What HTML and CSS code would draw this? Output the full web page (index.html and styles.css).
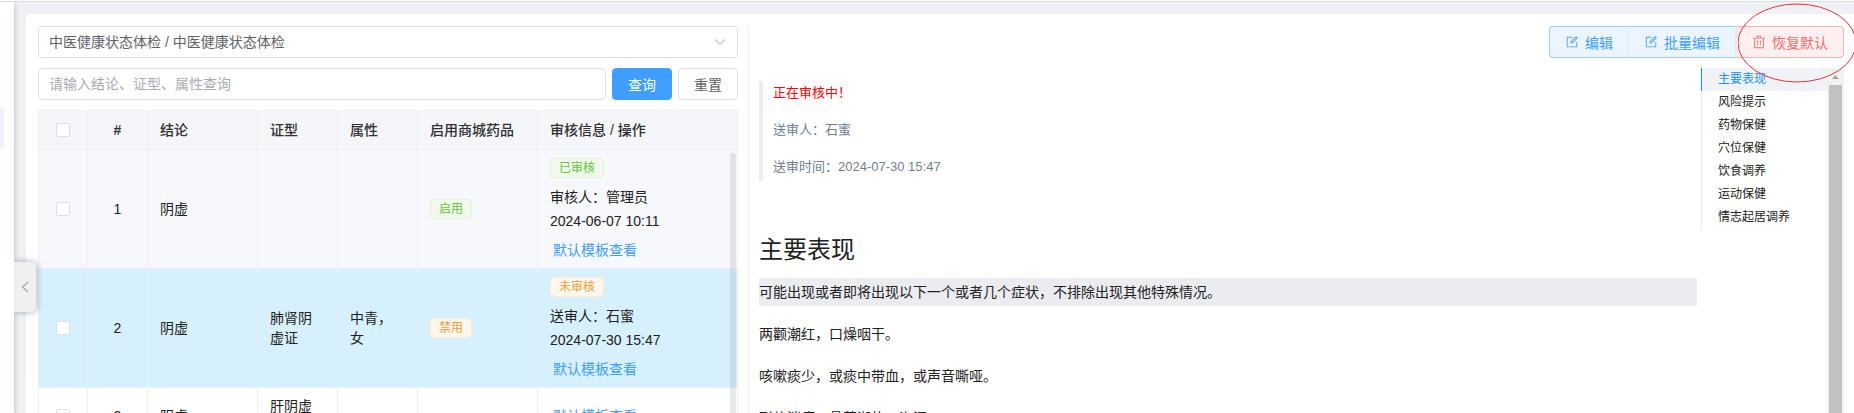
FILE: index.html
```html
<!DOCTYPE html>
<html lang="zh-CN">
  <head>
    <meta charset="UTF-8">
    <title>中医健康状态体检</title>
    <link rel="stylesheet" href="styles.css">
  </head>
  <body>
    <!-- Collapsed sidebar -->
    <aside class="sidebar">
      <div class="sidebar-item"></div>
      <button class="sidebar-toggle" type="button" aria-label="收起">
        <svg width="8" height="12" viewBox="0 0 8 12"><path d="M7 1L1.5 6L7 11" fill="none" stroke="#a8a8a8" stroke-width="1.3"/></svg>
      </button>
    </aside>

    <main class="card">
      <!-- Left: filter and list -->
      <section class="list">
        <div class="select-box">
          <select class="control" aria-label="体检类型">
            <option>中医健康状态体检 / 中医健康状态体检</option>
          </select>
          <svg class="chevron" width="12" height="8" viewBox="0 0 12 8"><path d="M1 1.5L6 6.5L11 1.5" fill="none" stroke="#c0c4cc" stroke-width="1.2"/></svg>
        </div>

        <form class="search">
          <input class="control" type="text" aria-label="查询" placeholder="请输入结论、证型、属性查询">
          <button class="btn btn-primary" type="button">查询</button>
          <button class="btn" type="button">重置</button>
        </form>

        <div class="table-box">
          <table>
            <colgroup>
              <col class="col-check">
              <col class="col-index">
              <col class="col-result">
              <col class="col-type">
              <col class="col-type">
              <col class="col-drug">
              <col>
            </colgroup>
            <thead>
              <tr>
                <th class="center"><input type="checkbox" aria-label="全选"></th>
                <th class="center">#</th>
                <th>结论</th>
                <th>证型</th>
                <th>属性</th>
                <th>启用商城药品</th>
                <th>审核信息 / 操作</th>
              </tr>
            </thead>
            <tbody>
              <tr class="striped">
                <td class="center"><input type="checkbox" aria-label="选择 1"></td>
                <td class="center">1</td>
                <td>阴虚</td>
                <td></td>
                <td></td>
                <td><span class="tag tag-success">启用</span></td>
                <td>
                  <span class="tag tag-success">已审核</span>
                  <div class="audit">审核人：管理员<br>2024-06-07 10:11</div>
                  <a class="link" href="#">默认模板查看</a>
                </td>
              </tr>
              <tr class="current">
                <td class="center"><input type="checkbox" aria-label="选择 2"></td>
                <td class="center">2</td>
                <td>阴虚</td>
                <td>肺肾阴虚证</td>
                <td>中青，女</td>
                <td><span class="tag tag-warning">禁用</span></td>
                <td>
                  <span class="tag tag-warning">未审核</span>
                  <div class="audit">送审人：石蜜<br>2024-07-30 15:47</div>
                  <a class="link" href="#">默认模板查看</a>
                </td>
              </tr>
              <tr>
                <td class="center"><input type="checkbox" aria-label="选择 3"></td>
                <td class="center">3</td>
                <td>阴虚</td>
                <td>肝阴虚证</td>
                <td></td>
                <td></td>
                <td><a class="link" href="#">默认模板查看</a></td>
              </tr>
            </tbody>
          </table>
          <div class="table-thumb"></div>
        </div>
      </section>

      <!-- Right: detail -->
      <section class="detail">
        <div class="btn-group">
          <button class="btn btn-edit" type="button">
            <svg class="icon" viewBox="0 0 1024 1024"><path fill="currentColor" d="M832 512a32 32 0 1 1 64 0v352a32 32 0 0 1-32 32H160a32 32 0 0 1-32-32V160a32 32 0 0 1 32-32h352a32 32 0 0 1 0 64H192v640h640V512z"/><path fill="currentColor" d="m469.952 554.24 52.8-7.552L847.104 222.4a32 32 0 1 0-45.248-45.248L477.44 501.44l-7.552 52.8zm422.4-422.4a96 96 0 0 1 0 135.808l-331.84 331.84a32 32 0 0 1-18.112 9.088L436.8 623.68a32 32 0 0 1-36.224-36.224l15.104-105.6a32 32 0 0 1 9.024-18.112l331.904-331.84a96 96 0 0 1 135.744 0z"/></svg>
            编辑
          </button>
          <button class="btn btn-edit" type="button">
            <svg class="icon" viewBox="0 0 1024 1024"><path fill="currentColor" d="M832 512a32 32 0 1 1 64 0v352a32 32 0 0 1-32 32H160a32 32 0 0 1-32-32V160a32 32 0 0 1 32-32h352a32 32 0 0 1 0 64H192v640h640V512z"/><path fill="currentColor" d="m469.952 554.24 52.8-7.552L847.104 222.4a32 32 0 1 0-45.248-45.248L477.44 501.44l-7.552 52.8zm422.4-422.4a96 96 0 0 1 0 135.808l-331.84 331.84a32 32 0 0 1-18.112 9.088L436.8 623.68a32 32 0 0 1-36.224-36.224l15.104-105.6a32 32 0 0 1 9.024-18.112l331.904-331.84a96 96 0 0 1 135.744 0z"/></svg>
            批量编辑
          </button>
          <button class="btn btn-danger" type="button">
            <svg class="icon" viewBox="0 0 1024 1024"><path fill="currentColor" d="M160 256H96a32 32 0 0 1 0-64h256V95.936a32 32 0 0 1 32-32h256a32 32 0 0 1 32 32V192h256a32 32 0 1 1 0 64h-64v672a32 32 0 0 1-32 32H192a32 32 0 0 1-32-32V256zm448-64v-64H416v64h192zM224 896h576V256H224v640zm192-128a32 32 0 0 1-32-32V416a32 32 0 0 1 64 0v320a32 32 0 0 1-32 32zm192 0a32 32 0 0 1-32-32V416a32 32 0 0 1 64 0v320a32 32 0 0 1-32 32z"/></svg>
            恢复默认
          </button>
        </div>

        <div class="detail-body">
          <article class="content">
            <blockquote>
              <p class="pending">正在审核中！</p>
              <p>送审人：石蜜</p>
              <p>送审时间：2024-07-30 15:47</p>
            </blockquote>
            <h2>主要表现</h2>
            <p class="lead">可能出现或者即将出现以下一个或者几个症状，不排除出现其他特殊情况。</p>
            <p>两颧潮红，口燥咽干。</p>
            <p>咳嗽痰少，或痰中带血，或声音嘶哑。</p>
            <p>形体消瘦，骨蒸潮热，盗汗。</p>
          </article>

          <nav class="anchor">
            <a class="active" href="#">主要表现</a>
            <a href="#">风险提示</a>
            <a href="#">药物保健</a>
            <a href="#">穴位保健</a>
            <a href="#">饮食调养</a>
            <a href="#">运动保健</a>
            <a href="#">情志起居调养</a>
          </nav>

          <div class="scrollbar">
            <svg width="17" height="17" viewBox="0 0 17 17"><path d="M5 11L8.5 7L12 11Z" fill="#a3a3a3"/></svg>
            <div class="scrollbar-thumb"></div>
          </div>
        </div>
      </section>
    </main>

    <!-- Red marker around the reset button -->
    <svg class="marker" width="116" height="86" viewBox="0 0 116 86"><ellipse cx="59" cy="43" rx="59" ry="39" fill="none" stroke="#e6323c"/></svg>
  </body>
</html>
```

FILE: styles.css
```css
* {
  box-sizing: border-box;
}

body {
  margin: 0;
  height: 100vh;
  display: flex;
  overflow: hidden;
  position: relative;
  padding-top: 1px;
  border-top: 1px solid #fff;
  box-shadow: inset 0 1px #dcdfe0; /* header bottom line */
  background: #eff1f5;
  color: #212121;
  font-family: "Liberation Sans", "Noto Sans CJK SC", sans-serif;
  font-size: 14px;
}

p, h2, blockquote {
  margin: 0;
}

a {
  text-decoration: none;
}

button, input, select {
  font: inherit;
}

/* Sidebar */
.sidebar {
  position: relative;
  flex: none;
  width: 14px;
  background: #fff;
  box-shadow: 1px 2px 5px rgba(0, 21, 41, 0.2);
}

.sidebar-item {
  width: 4px;
  height: 40px;
  margin-top: 106px;
  border-radius: 0 4px 4px 0;
  background: #ecf3fe;
}

.sidebar-toggle {
  position: absolute;
  top: 260px;
  left: 14px;
  z-index: 2;
  display: flex;
  align-items: center;
  justify-content: center;
  width: 22px;
  height: 50px;
  padding: 0;
  border: 0;
  border-radius: 0 5px 5px 0;
  background: #f0f0f0;
  box-shadow: 1px 0 6px rgba(0, 21, 41, 0.35);
  clip-path: inset(-8px -8px -8px 0);
}

/* Page card */
.card {
  flex: 1;
  min-width: 0;
  display: flex;
  margin: 12px 0 0 12px;
  padding: 12px 10px 0 12px;
  border-radius: 4px 0 0 0;
  background: #fff;
}

.list {
  flex: none;
  width: 700px;
  display: flex;
  flex-direction: column;
  gap: 10px;
}

.control {
  width: 100%;
  height: 32px;
  padding: 0 10px;
  border: 1px solid #dcdfe6;
  border-radius: 4px;
  background: #fff;
  color: #606266;
  appearance: none;
}

.control::placeholder {
  color: #a8abb2;
}

.select-box {
  position: relative;
  display: flex;
}

.chevron {
  position: absolute;
  top: 12px;
  right: 12px;
  pointer-events: none;
}

.search {
  display: flex;
  gap: 6px;
}

.search .control {
  flex: 1;
}

.btn {
  flex: none;
  height: 32px;
  padding: 0 15px;
  border: 1px solid #dcdfe6;
  border-radius: 4px;
  background: #fff;
  color: #606266;
}

.btn-primary {
  border-color: #409eff;
  background: #409eff;
  color: #fff;
}

/* Table */
.table-box {
  position: relative;
  flex: 1;
  min-height: 0;
  overflow: hidden;
  border: solid #ebeef5;
  border-width: 1px 0 0 1px;
}

table {
  width: 100%;
  table-layout: fixed;
  border-spacing: 0;
}

.col-check {
  width: 49px;
}

.col-index {
  width: 60px;
}

.col-result {
  width: 110px;
}

.col-type {
  width: 80px;
}

.col-drug {
  width: 120px;
}

th, td {
  padding: 8px 12px;
  border: solid #ebeef5;
  border-width: 0 1px 1px 0;
  text-align: left;
  line-height: 20px;
}

th {
  height: 39px;
  background: #f4f6fa;
  color: #303133;
  font-weight: 500;
  white-space: nowrap;
}

.center {
  text-align: center;
}

th.center {
  font-weight: 700;
}

.striped td {
  background: #f6f8fc;
}

.current td {
  background: #d7f0fe;
}

input[type="checkbox"] {
  display: block;
  width: 14px;
  height: 14px;
  margin: 0 auto;
  border: 1px solid #dcdfe6;
  border-radius: 2px;
  background: #fff;
  appearance: none;
}

.tag {
  display: block;
  width: max-content;
  height: 20px;
  padding: 0 8px;
  border: 1px solid;
  border-radius: 4px;
  font-size: 12px;
  line-height: 18px;
}

.tag-success {
  border-color: #e1f3d8;
  background: #f0f9eb;
  color: #67c23a;
}

.tag-warning {
  border-color: #faecd8;
  background: #fdf6ec;
  color: #e6a23c;
}

.audit {
  margin: 7px 0;
  line-height: 24px;
}

.link {
  display: block;
  padding: 0 3px;
  color: #409eff;
}

.table-thumb {
  position: absolute;
  top: 42px;
  right: 2px;
  width: 6px;
  height: 100%;
  border-radius: 4px;
  background: rgba(144, 147, 153, 0.2);
}

/* Detail */
.detail {
  flex: 1;
  min-width: 0;
  display: flex;
  flex-direction: column;
  gap: 10px;
  margin-left: 10px;
  padding-left: 10px;
  border-left: 1px solid #ebeef5;
}

.btn-group {
  display: flex;
  justify-content: flex-end;
}

.btn-group .btn {
  display: flex;
  align-items: center;
  gap: 6px;
  border-radius: 0;
}

.btn-group .btn:first-child {
  border-radius: 4px 0 0 4px;
}

.btn-group .btn:last-child {
  border-radius: 0 4px 4px 0;
}

.icon {
  width: 14px;
  height: 14px;
}

.btn-edit {
  border-color: #a0cfff;
  border-right-color: #d9ecff;
  background: #ecf5ff;
  color: #409eff;
}

.btn-edit + .btn-edit {
  border-left-width: 0;
}

.btn-group .btn-danger {
  border-color: #fab6b6;
  border-left-color: #fde2e2;
  background: #fef0f0;
  color: #f56c6c;
}

.detail-body {
  flex: 1;
  min-height: 0;
  display: flex;
  overflow: hidden;
}

.content {
  flex: 1;
  padding-top: 13px;
  line-height: 28px;
}

blockquote {
  display: flex;
  flex-direction: column;
  gap: 14px;
  padding: 0 0 3px 10px;
  border-left: 4px solid #ebecf0;
  color: #708090;
  font-size: 13px;
  line-height: 23px;
}

.pending {
  color: #f00;
}

h2 {
  margin: 52px 0 11px;
  font-size: 24px;
  font-weight: 400;
  line-height: 34px;
}

.content > p {
  margin-bottom: 14px;
}

.lead {
  background: #ebecf0;
}

/* Anchor menu */
.anchor {
  flex: none;
  align-self: flex-start;
  width: 126px;
  margin-left: 4px;
}

.anchor a {
  display: block;
  padding-left: 16px;
  border-left: 1px solid #ebebeb;
  color: #212121;
  font-size: 12px;
  line-height: 23px;
}

.anchor .active {
  border-color: #1890ff;
  background: #f0f2f5;
  color: #1890ff;
}

.scrollbar {
  flex: none;
  display: flex;
  flex-direction: column;
  width: 17px;
  padding: 0 2px;
  background: #f1f1f1;
}

.scrollbar svg {
  flex: none;
  align-self: center;
}

.scrollbar-thumb {
  flex: 1;
  background: #c1c1c1;
}

.marker {
  position: absolute;
  top: -1px;
  right: 0;
  pointer-events: none;
}
```
